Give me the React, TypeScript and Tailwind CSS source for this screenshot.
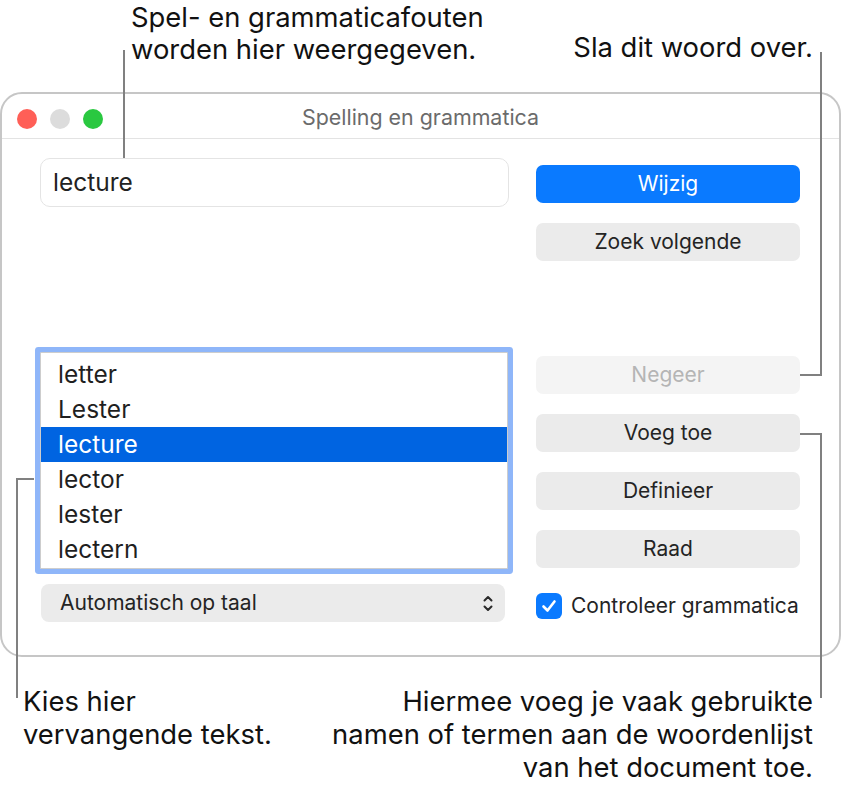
import React from "react";

const font = "font-['Inter','Liberation_Sans',sans-serif]";

function Btn({ children, primary, disabled }: { children: React.ReactNode; primary?: boolean; disabled?: boolean }) {
  const cls = primary
    ? "bg-[#0a7aff] text-white"
    : disabled
    ? "bg-[#f4f4f4] text-[#b5b5b5]"
    : "bg-[#ebebeb] text-[#242424]";
  return (
    <div className={`h-[38px] w-full rounded-[7px] flex items-center justify-center text-[21px] ${cls}`}>
      {children}
    </div>
  );
}

export default function App() {
  const words = ["letter", "Lester", "lecture", "lector", "lester", "lectern"];
  return (
    <div className={`relative w-[843px] h-[795px] bg-white overflow-hidden text-[#111] ${font}`}>
      {/* top callouts */}
      <div className="h-[92px] flex justify-between">
        <div className="pl-[131px] pt-px text-[27.4px] leading-[32px]">
          <div>Spel- en grammaticafouten</div>
          <div>worden hier weergegeven.</div>
        </div>
        <div className="pt-[31px] pr-[30px] text-[27.4px] leading-[32px]">Sla dit woord over.</div>
      </div>

      {/* window */}
      <div className="w-[841px] h-[565px] rounded-[22px] border-2 border-[#c6c6c6] bg-white flex flex-col overflow-hidden">
        <div className="h-[45px] shrink-0 border-b border-[#e3e3e3] grid grid-cols-[1fr_auto_1fr] items-center pt-[6px]">
          <div className="flex items-center gap-[13px] pl-[15px]">
            <div className="w-[20px] h-[20px] rounded-full bg-[#ff5f57]" />
            <div className="w-[20px] h-[20px] rounded-full bg-[#dcdcdc]" />
            <div className="w-[20px] h-[20px] rounded-full bg-[#2ac840]" />
          </div>
          <div className="text-[21.4px] text-[#6b6b6b] -mt-[3px]">Spelling en grammatica</div>
          <div />
        </div>

        <div className="flex pl-[38px] gap-[27px]">
          {/* left column */}
          <div className="w-[469px] pt-[19px] flex flex-col">
            <div className="h-[49px] rounded-[10px] border border-[#e4e4e4] flex items-center pl-[12px] text-[24.5px] text-[#222]">
              lecture
            </div>
            <div className="mt-[145px] w-[468px] h-[217px] border border-[#cdcdcd] rounded-[1px] shadow-[0_0_0_5px_#8fb6f9] bg-white pt-[4px]">
              {words.map((w) => (
                <div
                  key={w}
                  className={`h-[35px] flex items-center pl-[17px] text-[24.5px] ${
                    w === "lecture" ? "bg-[#0064e1] text-white" : "text-[#1f1f1f]"
                  }`}
                >
                  {w}
                </div>
              ))}
            </div>
            <div className="mt-[15px] ml-px w-[464px] h-[38px] rounded-[8px] bg-[#ebebeb] flex items-center justify-between pl-[19px] pr-[12px] text-[21px] text-[#242424]">
              <span>Automatisch op taal</span>
              <svg width="10" height="17" viewBox="0 0 10 17" fill="none" stroke="#2a2a2a" strokeWidth="2" strokeLinecap="round" strokeLinejoin="round">
                <path d="M1.5 5.5 L5 2 L8.5 5.5" />
                <path d="M1.5 11.5 L5 15 L8.5 11.5" />
              </svg>
            </div>
          </div>

          {/* right column */}
          <div className="w-[264px] pt-[26px] flex flex-col">
            <Btn primary>Wijzig</Btn>
            <div className="mt-[20px]"><Btn>Zoek volgende</Btn></div>
            <div className="mt-[95px]"><Btn disabled>Negeer</Btn></div>
            <div className="mt-[20px]"><Btn>Voeg toe</Btn></div>
            <div className="mt-[20px]"><Btn>Definieer</Btn></div>
            <div className="mt-[20px]"><Btn>Raad</Btn></div>
            <div className="mt-[22px] flex items-center gap-[9px]">
              <div className="w-[26px] h-[26px] rounded-[6px] bg-[#0a7aff] flex items-center justify-center">
                <svg width="18" height="18" viewBox="0 0 18 18" fill="none" stroke="white" strokeWidth="2.6" strokeLinecap="round" strokeLinejoin="round">
                  <path d="M3.5 9.5 L7.5 13.5 L14.5 4.5" />
                </svg>
              </div>
              <span className="text-[21px] text-[#242424] whitespace-nowrap">Controleer grammatica</span>
            </div>
          </div>
        </div>
      </div>

      {/* bottom callouts */}
      <div className="flex justify-between pt-[28px] text-[27.4px] leading-[33px]">
        <div className="pl-[23px]">
          <div>Kies hier</div>
          <div>vervangende tekst.</div>
        </div>
        <div className="pr-[30px] text-right">
          <div>Hiermee voeg je vaak gebruikte</div>
          <div>namen of termen aan de woordenlijst</div>
          <div>van het document toe.</div>
        </div>
      </div>

      {/* callout lines */}
      <div className="absolute left-[123px] top-[50px] w-[2px] h-[108px] bg-[#808080]" />
      <div className="absolute left-[820px] top-[52px] w-[2px] h-[324px] bg-[#808080]" />
      <div className="absolute left-[800px] top-[374px] w-[22px] h-[2px] bg-[#808080]" />
      <div className="absolute left-[800px] top-[433px] w-[22px] h-[2px] bg-[#808080]" />
      <div className="absolute left-[820px] top-[433px] w-[2px] h-[265px] bg-[#808080]" />
      <div className="absolute left-[16px] top-[478px] w-[18px] h-[2px] bg-[#808080]" />
      <div className="absolute left-[16px] top-[478px] w-[2px] h-[220px] bg-[#808080]" />
    </div>
  );
}
